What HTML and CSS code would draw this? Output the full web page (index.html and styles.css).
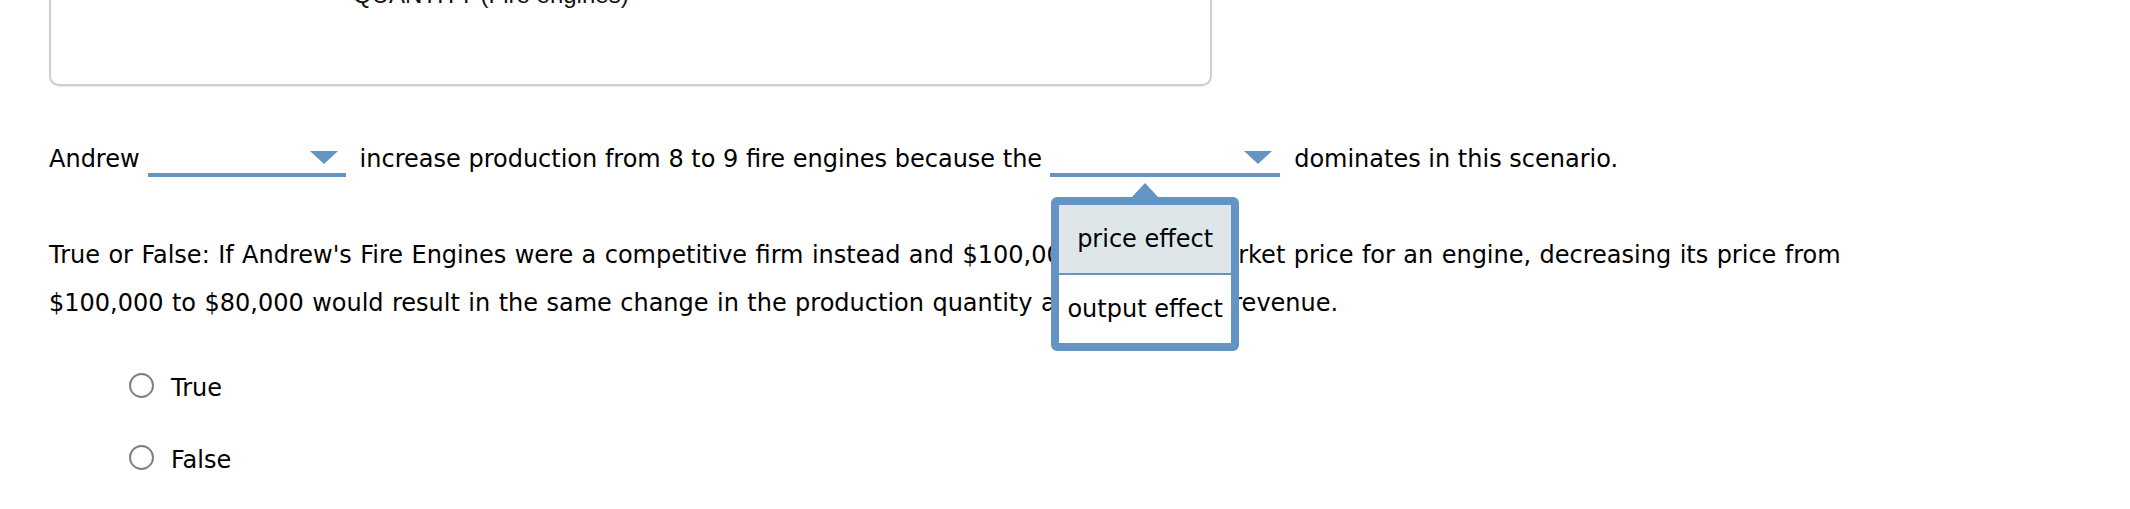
FILE: index.html
```html
<!DOCTYPE html>
<html lang="en">
<head>
<meta charset="utf-8">
<title>Andrew's Fire Engines</title>
<link rel="stylesheet" href="styles.css">
</head>
<body>
<div class="chart-box">
  <div class="axis-label">QUANTITY (Fire engines)</div>
</div>
<div class="question">
  <div class="q-line">
    <span class="q-text">Andrew</span>
    <span class="dropdown"><span class="dd-arrow"></span></span>
    <span class="q-text">increase production from 8 to 9 fire engines because the</span>
    <span class="dropdown dropdown-wide">
      <span class="dd-arrow"></span>
      <div class="popup">
        <div class="popup-tip"></div>
        <div class="option option-hover">price effect</div>
        <div class="option">output effect</div>
      </div>
    </span>
    <span class="q-text">dominates in this scenario.</span>
  </div>
  <p class="tf">True or False: If Andrew's Fire Engines were a competitive firm instead and $100,000 were the market price for an engine, decreasing its price from $100,000 to $80,000 would result in the same change in the production quantity and the overall revenue.</p>
  <ul class="choices">
    <li class="choice"><span class="radio"></span><span>True</span></li>
    <li class="choice"><span class="radio"></span><span>False</span></li>
  </ul>
</div>
</body>
</html>
```
FILE: styles.css
```css
html, body {
  margin: 0;
  padding: 0;
  background: #ffffff;
}
body {
  font-family: "DejaVu Sans", Verdana, sans-serif;
  font-size: 24px;
  color: #000000;
  overflow: hidden;
}
.chart-box {
  box-sizing: border-box;
  margin: -60px 0 0 49px;
  width: 1163px;
  height: 146px;
  border: 2px solid #cfcfcf;
  border-radius: 10px;
  box-shadow: 0 1px 1px rgba(0, 0, 0, 0.08);
  background: #ffffff;
}
.axis-label {
  font-family: "Liberation Sans", Arial, sans-serif;
  font-size: 24px;
  line-height: 28px;
  padding: 39px 0 0 302px;
  color: #111;
}
.question {
  padding-left: 49px;
  width: 1880px;
}
.q-line {
  display: flex;
  align-items: flex-start;
  margin-top: 59px;
  line-height: 28px;
  white-space: nowrap;
}
.q-text {
  flex: none;
}
.dropdown {
  position: relative;
  flex: none;
  box-sizing: border-box;
  display: flex;
  justify-content: flex-end;
  align-items: flex-start;
  width: 198px;
  height: 32px;
  padding: 6px 8px 0 0;
  margin: 0 14px 0 8px;
  border-bottom: 4px solid #6394c4;
}
.dropdown-wide {
  width: 230px;
}
.dd-arrow {
  width: 0;
  height: 0;
  border-left: 14px solid transparent;
  border-right: 14px solid transparent;
  border-top: 13px solid #6394c4;
}
.popup {
  position: absolute;
  left: 1px;
  top: 52px;
  box-sizing: border-box;
  width: 188px;
  border: 8px solid #6394c4;
  border-radius: 6px;
  background: #ffffff;
  z-index: 2;
}
.popup-tip {
  position: absolute;
  top: -22px;
  left: 50%;
  margin-left: -13px;
  width: 0;
  height: 0;
  border-left: 13px solid transparent;
  border-right: 13px solid transparent;
  border-bottom: 14px solid #6394c4;
}
.option {
  height: 68px;
  line-height: 68px;
  text-align: center;
  white-space: nowrap;
}
.option-hover {
  background: #dfe6e9;
  border-bottom: 2px solid #6394c4;
}
.tf {
  margin: 54px 0 0 0;
  line-height: 48px;
  word-spacing: 0.8px;
}
.choices {
  list-style: none;
  margin: 47px 0 0 0;
  padding: 0 0 0 80px;
}
.choice {
  display: flex;
  align-items: flex-start;
  line-height: 28px;
}
.choice + .choice {
  margin-top: 44px;
}
.radio {
  flex: none;
  box-sizing: border-box;
  width: 25px;
  height: 25px;
  margin: -1px 17px 0 0;
  border: 2px solid #808080;
  border-radius: 50%;
  background: #ffffff;
}
```
